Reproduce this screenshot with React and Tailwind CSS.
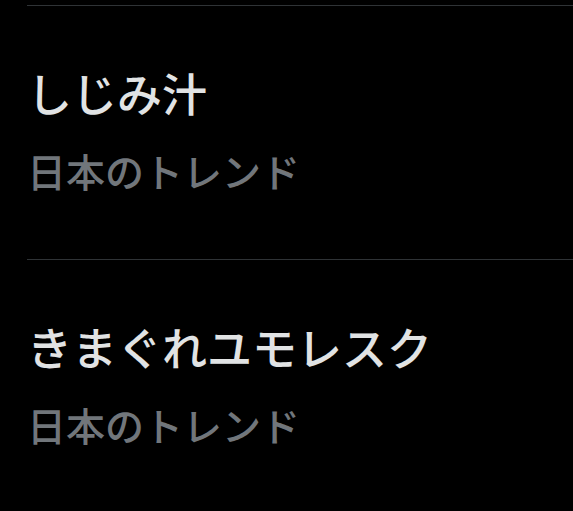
export default function App() {
  const trends = [
    { title: 'しじみ汁', meta: '日本のトレンド' },
    { title: 'きまぐれユモレスク', meta: '日本のトレンド' },
  ];

  return (
    <div
      className="min-h-screen bg-black pt-[5px] overflow-hidden"
      style={{ fontFamily: '"Noto Sans CJK JP", "Noto Sans", sans-serif' }}
    >
      {trends.map((t) => (
        <div key={t.title} className="ml-[27px] border-t border-[#2f3336] pt-[59px] pb-[65px]">
          <div className="text-[45px] leading-[56px] font-medium text-[#e1e3e4] whitespace-nowrap">{t.title}</div>
          <div className="mt-[25px] text-[39px] leading-[48px] font-medium text-[#71767b] whitespace-nowrap">{t.meta}</div>
        </div>
      ))}
    </div>
  );
}
